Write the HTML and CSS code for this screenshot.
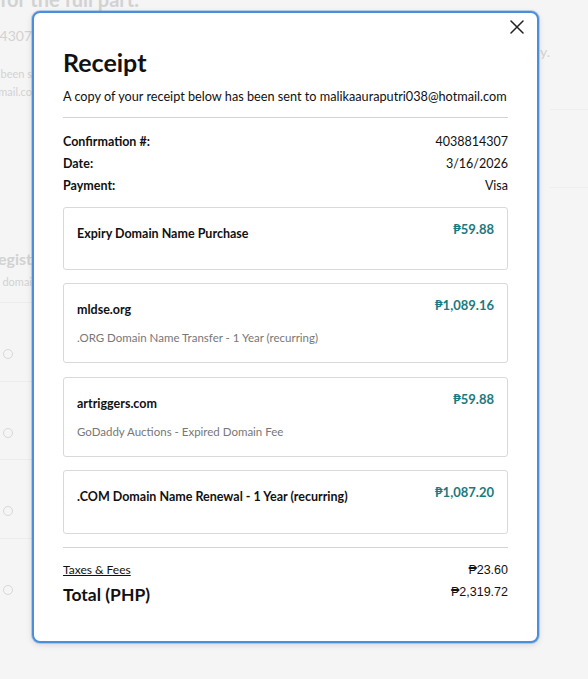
FILE: index.html
```html
<!DOCTYPE html>
<html lang="en">
<head>
<meta charset="utf-8">
<title>Receipt</title>
<link rel="stylesheet" href="styles.css">
</head>
<body>
<div class="page">
  <div class="bg">
    <div class="bg-heading">for the full part.</div>
    <div class="bg-body">
      <div class="bg-left">
        <div class="bg-line bg-conf"><span>4038814307</span></div>
        <div class="bg-line bg-sent"><span>has been s</span></div>
        <div class="bg-line bg-mail"><span>hotmail.co</span></div>
        <div class="bg-line bg-reg"><span>Regist</span></div>
        <div class="bg-line bg-dom"><span>a domai</span></div>
        <div class="bg-rows">
          <div class="bg-row"><span class="bg-icon"></span></div>
          <div class="bg-row"><span class="bg-icon"></span></div>
          <div class="bg-row"><span class="bg-icon"></span></div>
          <div class="bg-row"><span class="bg-icon"></span></div>
        </div>
      </div>
      <div class="bg-mid"></div>
      <div class="bg-right">
        <div class="bg-y">y.</div>
        <div class="bg-rrow"></div>
        <div class="bg-rrow"></div>
      </div>
    </div>
  </div>

  <div class="modal" role="dialog" aria-label="Receipt">
    <button class="close" aria-label="Close">
      <svg width="14" height="14" viewBox="0 0 14 14"><path d="M1 1L13 13M13 1L1 13" stroke="#222" stroke-width="1.5" fill="none" stroke-linecap="round"/></svg>
    </button>
    <h1 class="title">Receipt</h1>
    <p class="sub">A copy of your receipt below has been sent to malikaauraputri038@hotmail.com</p>
    <hr class="rule">
    <div class="info">
      <div class="info-row"><span class="label">Confirmation #:</span><span class="val">4038814307</span></div>
      <div class="info-row"><span class="label">Date:</span><span class="val">3/16/2026</span></div>
      <div class="info-row"><span class="label">Payment:</span><span class="val">Visa</span></div>
    </div>
    <div class="items">
      <div class="card card--single">
        <div class="card-main"><div class="card-title">Expiry Domain Name Purchase</div></div>
        <div class="price">₱59.88</div>
      </div>
      <div class="card">
        <div class="card-main"><div class="card-title">mldse.org</div><div class="card-desc">.ORG Domain Name Transfer - 1 Year (recurring)</div></div>
        <div class="price">₱1,089.16</div>
      </div>
      <div class="card">
        <div class="card-main"><div class="card-title">artriggers.com</div><div class="card-desc">GoDaddy Auctions - Expired Domain Fee</div></div>
        <div class="price">₱59.88</div>
      </div>
      <div class="card card--single card--last">
        <div class="card-main"><div class="card-title">.COM Domain Name Renewal - 1 Year (recurring)</div></div>
        <div class="price">₱1,087.20</div>
      </div>
    </div>
    <hr class="rule rule--bottom">
    <div class="tax-row"><a class="tax-link" href="#">Taxes &amp; Fees</a><span class="amt">₱23.60</span></div>
    <div class="total-row"><span class="total-label">Total (PHP)</span><span class="amt amt--total">₱2,319.72</span></div>
  </div>
</div>
</body>
</html>
```
FILE: styles.css
```css
* { box-sizing: border-box; }
html, body { margin: 0; padding: 0; }
body {
  font-family: Lato, "Noto Sans", "DejaVu Sans", sans-serif;
  color: #111;
  background: #f5f5f5;
}
.page {
  position: relative;
  width: 588px;
  height: 679px;
  overflow: hidden;
  background: #f5f5f5;
}

/* faded background page */
.bg { color: #d2d2d2; }
.bg-heading {
  font-weight: 700;
  font-size: 20px;
  line-height: 24px;
  margin-top: -13px;
  white-space: nowrap;
}
.bg-body {
  display: grid;
  grid-template-columns: 32px 1fr 49px;
}
.bg-left { overflow: hidden; }
.bg-line {
  display: flex;
  justify-content: flex-end;
  white-space: nowrap;
}
.bg-line span { flex-shrink: 0; }
.bg-conf { font-size: 14px; line-height: 18px; margin-top: 16px; }
.bg-sent { font-size: 11px; line-height: 14px; margin-top: 22px; }
.bg-mail { font-size: 11px; line-height: 14px; margin-top: 4px; }
.bg-reg { font-size: 16px; font-weight: 700; line-height: 20px; margin-top: 150px; }
.bg-dom { font-size: 11px; line-height: 14px; margin-top: 6px; }
.bg-rows { margin-top: 13px; }
.bg-row {
  height: 78.5px;
  border-top: 1px solid #ececec;
  padding: 46px 0 0 3px;
}
.bg-icon {
  display: block;
  width: 10px;
  height: 10px;
  border: 1px solid #d8d8d8;
  border-radius: 50%;
}
.bg-right { padding-top: 32px; }
.bg-y { font-size: 14px; line-height: 18px; padding-left: 1px; }
.bg-rrow {
  height: 78px;
  border-bottom: 1px solid #eeeeee;
  margin-left: 11px;
}
.bg-y + .bg-rrow { height: 49px; }

/* modal */
.modal {
  position: absolute;
  left: 32px;
  top: 11px;
  width: 507px;
  background: #fff;
  border: 2px solid #4d8edb;
  border-radius: 8px;
  box-shadow: 0 0 0 1px rgba(77, 142, 219, 0.35), 0 2px 6px rgba(0, 0, 0, 0.12);
  padding: 34px 29px 34px 29px;
}
.close {
  position: absolute;
  top: 2px;
  right: 8px;
  width: 24px;
  height: 24px;
  padding: 0;
  border: 0;
  background: transparent;
  display: flex;
  align-items: center;
  justify-content: center;
}
.title {
  margin: 0;
  font-size: 25px;
  line-height: 30px;
  font-weight: 700;
  color: #111;
}
.sub {
  margin: 11px 0 0;
  font-size: 12.7px;
  line-height: 16px;
  color: #111;
  white-space: nowrap;
}
.rule {
  margin: 13px 0 0;
  border: 0;
  border-top: 1px solid #d4d4d4;
  height: 0;
}
.info { margin-top: 12.5px; }
.info-row {
  display: flex;
  justify-content: space-between;
  font-size: 12.5px;
  line-height: 22px;
}
.label { font-weight: 700; }
.val { font-weight: 400; }

.items {
  margin-top: 10px;
  display: flex;
  flex-direction: column;
  gap: 13.5px;
}
.card {
  display: flex;
  justify-content: space-between;
  align-items: flex-start;
  border: 1px solid #d9d9d9;
  border-radius: 3px;
  padding: 13px 13px 17px 13px;
}
.card--single { padding-bottom: 26px; }
.card--last { padding-bottom: 27px; }
.card-title {
  margin-top: 4px;
  font-size: 12.5px;
  line-height: 18px;
  font-weight: 700;
  color: #111;
}
.card-desc {
  margin-top: 12px;
  font-size: 11.5px;
  line-height: 14px;
  color: #777;
}
.price {
  font-size: 13px;
  line-height: 16px;
  font-weight: 700;
  color: #1a7a7d;
  white-space: nowrap;
}
.rule--bottom { margin-top: 12.5px; }
.tax-row {
  display: flex;
  justify-content: space-between;
  align-items: flex-start;
  margin-top: 14.5px;
  font-size: 12px;
  line-height: 16px;
}
.tax-link { color: #111; text-decoration: underline; }
.amt {
  font-family: "Liberation Sans", Arial, sans-serif;
  font-size: 12.5px;
  line-height: 16px;
  color: #111;
}
.total-row {
  display: flex;
  justify-content: space-between;
  align-items: flex-start;
  margin-top: 5px;
}
.total-label {
  font-size: 17.5px;
  line-height: 24px;
  font-weight: 700;
}
.amt--total { margin-top: 1px; }
```
